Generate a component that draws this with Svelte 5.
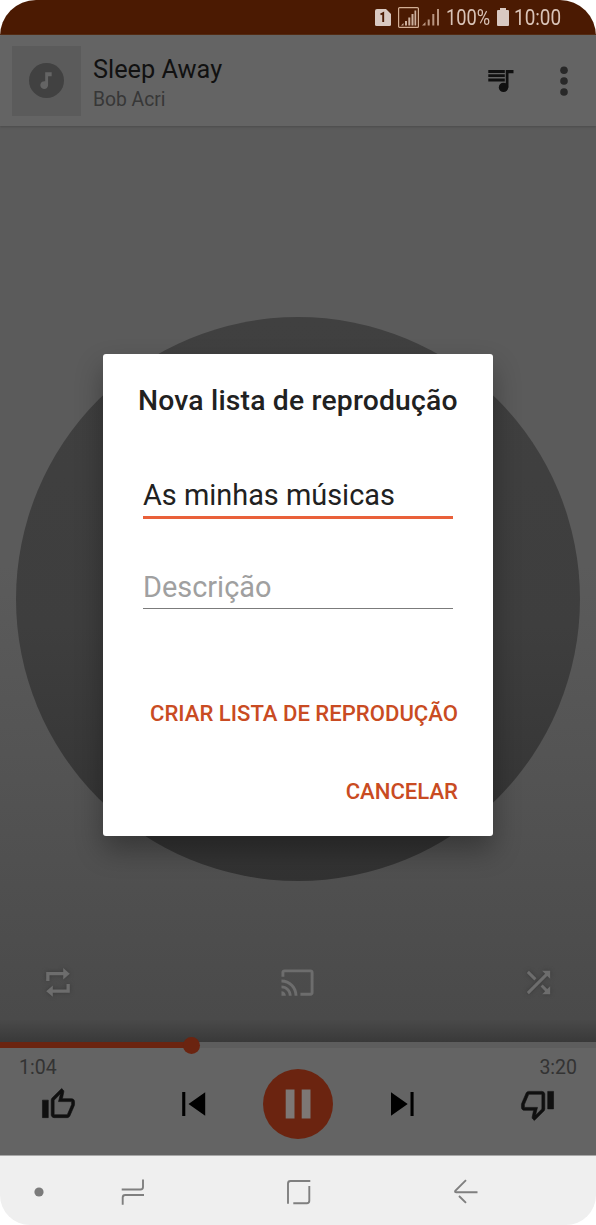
<script>
  // Current track
  const track = { title: "Sleep Away", artist: "Bob Acri" };
  const elapsed = "1:04";
  const duration = "3:20";
  const progress = 32.1;

  // New playlist form
  let name = "As minhas músicas";
  let description = "";
</script>

<div class="phone">
  <div class="status-bar">
    <svg width="16" height="17" viewBox="0 0 16 17">
      <path d="M2 0h9l5 5v10.500q0 1.500-1.500 1.500h-13Q0 17 0 15.500V2Q0 0 2 0z" fill="#d9c9c2" />
      <path d="M5.500 5.500l2.700-1.500v9" fill="none" stroke="#4b1a02" stroke-width="1.900" />
    </svg>
    <svg class="boxed-signal" width="21" height="21" viewBox="0 0 21 21">
      <rect x=".6" y=".6" width="19.800" height="19.800" rx="1" fill="none" stroke="#d3ae94" stroke-width="1.200" />
      <path d="M3 18.500l2.500-2.500v2.500zM7 14h2v4.500H7zM10.300 10.500h2v8h-2zM13.500 7h2v11.500h-2zM16.500 3.500h1.700v15h-1.700z" fill="#cdb09e" />
    </svg>
    <svg class="signal" width="18" height="18" viewBox="0 0 18 18">
      <path d="M0 17.500l3.500-3.500v3.500zM5.700 11.500h2v6h-2zM10.300 6h2v11.500h-2zM15 1h2v16.500h-2z" fill="#b99580" />
    </svg>
    <span class="level">100%</span>
    <svg class="battery" width="12" height="18" viewBox="0 0 12 18">
      <path d="M3 0h6v2h2q1 0 1 1v14q0 1-1 1H1q-1 0-1-1V3q0-1 1-1h2z" fill="#d9c9c2" />
    </svg>
    <span class="clock">10:00</span>
  </div>

  <header>
    <div class="cover">
      <svg width="35" height="35" viewBox="0 0 35 35">
        <circle cx="17.500" cy="17.500" r="17.500" fill="#414141" />
        <path d="M16.200 9.200h6.500v4h-3.600v8.800a3.900 3.900 0 1 1-2.900-3.700z" fill="#646464" />
      </svg>
    </div>
    <div class="track">
      <div class="title">{track.title}</div>
      <div class="artist">{track.artist}</div>
    </div>
    <svg class="queue" width="26" height="24" viewBox="0 0 26 24">
      <path d="M.3 1h16.500v2.900H.3zM.3 5.200h16.500v2.900H.3zM.3 9.500h16.500v2.900H.3z" />
      <path d="M17.800 1h7.700v3.200h-5v14.300h-2.700z" />
      <circle cx="15.500" cy="18.400" r="4.700" />
    </svg>
    <svg class="more" width="8" height="30" viewBox="0 0 8 30">
      <circle cx="4" cy="4.300" r="3.800" />
      <circle cx="4" cy="15" r="3.800" />
      <circle cx="4" cy="26" r="3.800" />
    </svg>
  </header>

  <main>
    <div class="disc"></div>
    <div class="modes">
      <svg class="repeat" width="24" height="29" viewBox="0 0 24 29">
        <path d="M.2 13V4h17V0l6.600 5.700-6.600 5.800V7.300H3.500V13z" />
        <path d="M23.800 16v8.800h-17v4L.2 23.200l6.600-5.800v4.100h13.700V16z" />
      </svg>
      <svg class="cast" width="35" height="35" viewBox="0 0 24 24">
        <path d="M21 3H3c-1.100 0-2 .9-2 2v3h2V5h18v14h-7v2h7c1.100 0 2-.9 2-2V5c0-1.100-.9-2-2-2zM1 18v3h3c0-1.660-1.340-3-3-3zm0-4v2c2.760 0 5 2.240 5 5h2c0-3.870-3.130-7-7-7zm0-4v2c4.970 0 9 4.030 9 9h2c0-6.080-4.930-11-11-11z" />
      </svg>
      <svg width="35" height="35" viewBox="0 0 24 24">
        <path d="M10.590 9.170L5.410 4 4 5.410l5.170 5.170 1.420-1.410zM14.500 4l2.040 2.040L4 18.590 5.410 20 17.960 7.460 20 9.500V4h-5.500zm.33 9.410l-1.410 1.410 3.130 3.130L14.500 20H20v-5.500l-2.040 2.040-3.130-3.130z" />
      </svg>
    </div>
  </main>

  <footer>
    <div class="seek">
      <div class="played" style="width: {progress}%"></div>
    </div>
    <div class="times">
      <span>{elapsed}</span>
      <span>{duration}</span>
    </div>
    <div class="controls">
      <svg class="thumb" width="35" height="35" viewBox="0 0 24 24">
        <path d="M9 21h9c.83 0 1.540-.5 1.840-1.220l3.020-7.050c.09-.23.14-.47.14-.73v-2c0-1.100-.9-2-2-2h-6.310l.95-4.570.03-.32c0-.41-.17-.79-.44-1.060L14.170 1 7.580 7.590C7.220 7.950 7 8.450 7 9v10c0 1.100.9 2 2 2zM9 9l4.340-4.340L12 10h9v2l-3 7H9V9zM1 9h4v12H1z" />
      </svg>
      <div class="transport">
        <svg width="24" height="24" viewBox="0 0 24 24">
          <path d="M.2 0h3.100v24H.2zM23.200.3v23.400L6.500 12z" />
        </svg>
        <div class="pause">
          <svg width="26" height="30" viewBox="0 0 26 30">
            <path d="M.7 .4h8.800v29.200H.7zM16.700.4h8.800v29.200h-8.800z" fill="#7d7775" />
          </svg>
        </div>
        <svg width="24" height="24" viewBox="0 0 24 24">
          <path d="M20.500 0h3.100v24h-3.100zM1 .3v23.400L17.700 12z" />
        </svg>
      </div>
      <svg class="thumb down" width="35" height="35" viewBox="0 0 24 24">
        <path d="M9 21h9c.83 0 1.540-.5 1.840-1.220l3.020-7.050c.09-.23.14-.47.14-.73v-2c0-1.100-.9-2-2-2h-6.310l.95-4.570.03-.32c0-.41-.17-.79-.44-1.060L14.170 1 7.580 7.590C7.220 7.950 7 8.450 7 9v10c0 1.100.9 2 2 2zM9 9l4.340-4.340L12 10h9v2l-3 7H9V9zM1 9h4v12H1z" />
      </svg>
    </div>
  </footer>

  <nav>
    <svg width="10" height="10" viewBox="0 0 10 10">
      <circle cx="5" cy="5" r="4.600" fill="#7b7b7b" />
    </svg>
    <svg class="recents" width="24" height="28" viewBox="0 0 24 28">
      <path d="M.7 11.500h18.800q2.500 0 2.500-2.500V1.500M1.700 26.800V19.500q0-2.500 2.500-2.500h18.800" />
    </svg>
    <svg class="home" width="26" height="26" viewBox="0 0 26 26">
      <path d="M2 24.700V4.500Q2 2 4.500 2h19.800M23.300 7v14.700q0 2.500-2.500 2.500H7.300" />
    </svg>
    <svg class="back" width="26" height="26" viewBox="0 0 26 26">
      <path d="M13 1.200L2.300 11.800q-.8 1.500 1 1.500h21.200M6 17l7 6.900" />
    </svg>
  </nav>

  <!-- New playlist dialog -->
  <div class="dialog">
    <h2>Nova lista de reprodução</h2>
    <div class="field focused">{name}</div>
    <div class="field" class:empty={!description}>{description || "Descrição"}</div>
    <button>CRIAR LISTA DE REPRODUÇÃO</button>
    <button class="cancel">CANCELAR</button>
  </div>
</div>

<style>
  :global(body) {
    background: #fff;
  }

  .phone {
    position: relative;
    display: flex;
    flex-direction: column;
    width: 596px;
    height: 1225px;
    overflow: hidden;
    border-radius: 36px 36px 30px 30px;
    font-family: Roboto, sans-serif;
  }

  svg {
    display: block;
    flex: none;
  }

  .status-bar {
    display: flex;
    align-items: center;
    box-sizing: border-box;
    height: 35px;
    padding-left: 375px;
    background: #4b1a02;
    border-bottom: 1px solid #54280f;
  }

  /* Condensed status text */
  .status-bar span {
    flex: none;
    padding-top: 2px;
    color: #d9c3b7;
    font-size: 22px;
    line-height: 30px;
    transform-origin: left;
  }

  .boxed-signal {
    margin-left: 7px;
  }

  .signal {
    margin-left: 3px;
  }

  .status-bar .level {
    width: 54px;
    margin-left: 6px;
    margin-right: -9px;
    transform: scaleX(0.83);
  }

  .battery {
    margin-left: 6px;
  }

  .status-bar .clock {
    margin-left: 5px;
    transform: scaleX(0.86);
  }

  header {
    display: flex;
    align-items: center;
    box-sizing: border-box;
    height: 91px;
    padding: 0 28px 0 12px;
    background: #646464;
    box-shadow: 0 1px 2px #4b4b4b;
    z-index: 1;
  }

  .cover {
    display: flex;
    align-items: center;
    justify-content: center;
    width: 69px;
    height: 70px;
    background: #5b5b5b;
  }

  .track {
    flex: 1;
    margin-left: 12px;
    padding-top: 6px;
  }

  .title {
    color: #111;
    font-size: 25.300px;
    line-height: 31px;
  }

  .artist {
    color: #373737;
    font-size: 19.300px;
    line-height: 29px;
  }

  .queue {
    fill: #101010;
  }

  .more {
    margin-left: 46px;
    fill: #282828;
  }

  main {
    display: flex;
    flex-direction: column;
    align-items: center;
    box-sizing: border-box;
    height: 916px;
    padding-top: 191px;
    background: linear-gradient(#5b5b5b 0%, #5b5b5b 48%, #4a4a4a 97.500%, #393939 100%);
  }

  .disc {
    width: 564px;
    height: 564px;
    border-radius: 50%;
    background: linear-gradient(#404040, #3e3e3e 55%, #323232);
  }

  .modes {
    display: flex;
    align-items: center;
    justify-content: space-between;
    box-sizing: border-box;
    width: 100%;
    margin-top: 83px;
    padding: 0 40px 0 42px;
  }

  .modes svg {
    fill: #6d6d6d;
    filter: drop-shadow(0 0 2px #393939);
  }

  .modes .repeat {
    margin: 0 4px;
  }

  .modes .cast {
    margin-top: 1px;
    filter: none;
  }

  footer {
    height: 113px;
    background: #646464;
  }

  .seek {
    height: 6px;
    background: #5d5d5d;
  }

  .played {
    position: relative;
    height: 6px;
    background: #6b2410;
  }

  .played::after {
    content: "";
    position: absolute;
    top: -5px;
    right: -9px;
    width: 17px;
    height: 17px;
    border-radius: 50%;
    background: #6b2410;
  }

  .times {
    display: flex;
    justify-content: space-between;
    padding: 8px 19px 0;
    color: #333;
    font-size: 19.500px;
    line-height: 24px;
  }

  .controls {
    display: flex;
    align-items: center;
    justify-content: space-between;
    margin-top: -11px;
    padding: 0 41px;
  }

  .thumb {
    fill: #101010;
    stroke: #101010;
    stroke-width: 0.400;
  }

  .down {
    transform: rotate(180deg);
  }

  .transport {
    display: flex;
    align-items: center;
    gap: 57px;
    margin-right: 1px;
  }

  .pause {
    display: flex;
    align-items: center;
    justify-content: center;
    width: 70px;
    height: 70px;
    border-radius: 50%;
    background: #6b2410;
  }

  nav {
    display: flex;
    align-items: center;
    box-sizing: border-box;
    height: 70px;
    padding: 3px 0 0 34px;
    background: #efefef;
    border-top: 1px solid #a8a8a8;
  }

  nav path {
    fill: none;
    stroke: #7f7f7f;
    stroke-width: 1.900;
  }

  .recents {
    margin-left: 77px;
  }

  .home {
    margin-left: 141px;
  }

  .back {
    margin-left: 141px;
  }

  .dialog {
    position: absolute;
    top: 354px;
    left: 103px;
    display: flex;
    flex-direction: column;
    box-sizing: border-box;
    width: 390px;
    height: 482px;
    padding: 28px 35px 0;
    background: #fff;
    border-radius: 3px;
    box-shadow: 0 14px 28px rgba(0, 0, 0, 0.32);
    z-index: 2;
  }

  h2 {
    margin: 0;
    color: #212121;
    font-size: 28.300px;
    font-weight: 500;
    letter-spacing: 0.190px;
    line-height: 38px;
    white-space: nowrap;
  }

  .field {
    box-sizing: border-box;
    height: 43px;
    margin: 47px 5px 0;
    color: #212121;
    font-size: 28.900px;
    line-height: 42px;
    border-bottom: 1px solid #7b7b7b;
  }

  .field.focused {
    margin-top: 54px;
    height: 45px;
    border-bottom: 3px solid #e9603a;
  }

  .field.empty {
    color: #a0a0a0;
  }

  button {
    align-self: flex-end;
    margin-top: 88px;
    padding: 0;
    color: #c94b22;
    font-family: inherit;
    font-size: 22.100px;
    font-weight: 500;
    line-height: 32px;
    white-space: nowrap;
    background: none;
    border: none;
  }

  .cancel {
    margin-top: 46px;
  }
</style>
